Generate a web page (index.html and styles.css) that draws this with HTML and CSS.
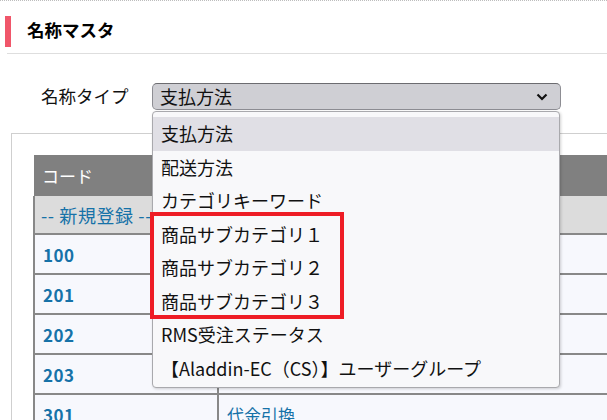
FILE: index.html
```html
<!DOCTYPE html>
<html lang="ja">
<head>
<meta charset="utf-8">
<title>名称マスタ</title>
<link rel="stylesheet" href="styles.css">
</head>
<body>
<div class="page">
  <div class="title-wrap">
    <h1 class="title">名称マスタ</h1>
  </div>
  <div class="form-row">
    <label class="label">名称タイプ</label>
    <div class="select-wrap">
      <div class="select">
        <span>支払方法</span>
        <svg class="chev" width="12" height="8" viewBox="0 0 12 8"><path d="M1.5 1.5 L6 6 L10.5 1.5" fill="none" stroke="#111" stroke-width="2.2"/></svg>
      </div>
      <ul class="dropdown">
        <li class="opt active">支払方法</li>
        <li class="opt">配送方法</li>
        <li class="opt">カテゴリキーワード</li>
        <li class="opt">商品サブカテゴリ１</li>
        <li class="opt">商品サブカテゴリ２</li>
        <li class="opt">商品サブカテゴリ３</li>
        <li class="opt">RMS受注ステータス</li>
        <li class="opt">【Aladdin-EC（CS）】ユーザーグループ</li>
      </ul>
      <div class="highlight"></div>
    </div>
  </div>
  <div class="panel">
    <table class="grid">
      <thead>
        <tr><th class="c1">コード</th><th class="c2">名称</th></tr>
      </thead>
      <tbody>
        <tr class="new"><td><a class="newlink">-- 新規登録 --</a></td><td></td></tr>
        <tr><td><a class="code">100</a></td><td><a>銀行振込</a></td></tr>
        <tr><td><a class="code">201</a></td><td><a>クレジットカード</a></td></tr>
        <tr><td><a class="code">202</a></td><td><a>コンビニ決済</a></td></tr>
        <tr><td><a class="code">203</a></td><td><a>後払い</a></td></tr>
        <tr><td><a class="code">301</a></td><td><a>代金引換</a></td></tr>
      </tbody>
    </table>
  </div>
</div>
</body>
</html>
```

FILE: styles.css
```css
* { box-sizing: border-box; }
html, body { margin: 0; padding: 0; background: #fff; overflow: hidden; }
body {
  font-family: "Noto Sans CJK JP", "Noto Sans", sans-serif;
  font-size: 18px;
  color: #111;
  width: 607px;
  height: 420px;
}
.page {
  border-top: 1px dotted #bdbdbd;
  position: relative;
}
.title-wrap {
  padding: 15px 0 6px 0;
  border-bottom: 1px solid #dedede;
  margin-left: 7px;
}
.title {
  margin: 0 0 0 -2px;
  height: 31px;
  border-left: 6px solid #f0566a;
  padding-left: 16px;
  font-size: 17.5px;
  font-weight: bold;
  line-height: 28px;
  color: #000;
}
.form-row {
  display: flex;
  align-items: flex-start;
  padding: 29px 0 0 41px;
  height: 79px;
}
.label {
  width: 111px;
  line-height: 25px;
  font-size: 17.5px;
}
.select-wrap { position: relative; }
.select {
  width: 409px;
  height: 27px;
  background: #cfcfd4;
  border: 1px solid #8d8d93;
  border-top-color: #6c6c70;
  border-radius: 5px;
  display: flex;
  align-items: center;
  justify-content: space-between;
  padding: 0 12px 0 7px;
  font-size: 18px;
  line-height: 25px;
}
.chev { display: block; margin-top: 1px; }
.dropdown {
  position: absolute;
  left: 0;
  top: 28px;
  width: 408px;
  height: 277px;
  margin: 0;
  padding: 5px 0 4px;
  list-style: none;
  background: #f8f8fa;
  border: 1px solid #a9a9ad;
  border-radius: 4px;
  box-shadow: 1px 1px 3px rgba(0,0,0,0.18);
  z-index: 5;
}
.opt {
  height: 33.5px;
  line-height: 32px;
  padding-left: 8px;
  font-size: 18px;
  color: #111;
  white-space: nowrap;
}
.opt.active { background: #e0dfe5; }
.highlight {
  position: absolute;
  left: -2px;
  top: 129px;
  width: 194px;
  height: 107px;
  border: 4.5px solid #ee1c25;
  z-index: 6;
}
.panel {
  margin-left: 11px;
  width: 620px;
  border: 1px solid #cfcfcf;
  border-right: none;
  padding: 21px 0 0 21px;
  height: 320px;
}
.grid {
  border-collapse: collapse;
  width: 620px;
  table-layout: fixed;
}
.grid th {
  background: #808080;
  color: #fff;
  font-weight: normal;
  text-align: left;
  height: 41px;
  padding: 0 8px;
  font-size: 17px;
}
.grid th.c1 { width: 184px; }
.grid td {
  height: 40px;
  padding: 0 8px;
  border: 2px solid #888;
  border-top: none;
  background: #f7f8fd;
  font-size: 17px;
}
.grid td:first-child { border-left: 2px solid #888; }
.grid tr.new td {
  background: #dcdcdc;
  height: 38px;
  border-left: none;
  border-right: none;
}
.grid tr.new td:first-child { border-left: 2px solid #888; padding-left: 6px; }
.grid a { color: #1672a8; text-decoration: none; }
.grid a.newlink { font-size: 18px; letter-spacing: 0.6px; }
.grid a.code { font-weight: bold; letter-spacing: 0.5px; }
```
